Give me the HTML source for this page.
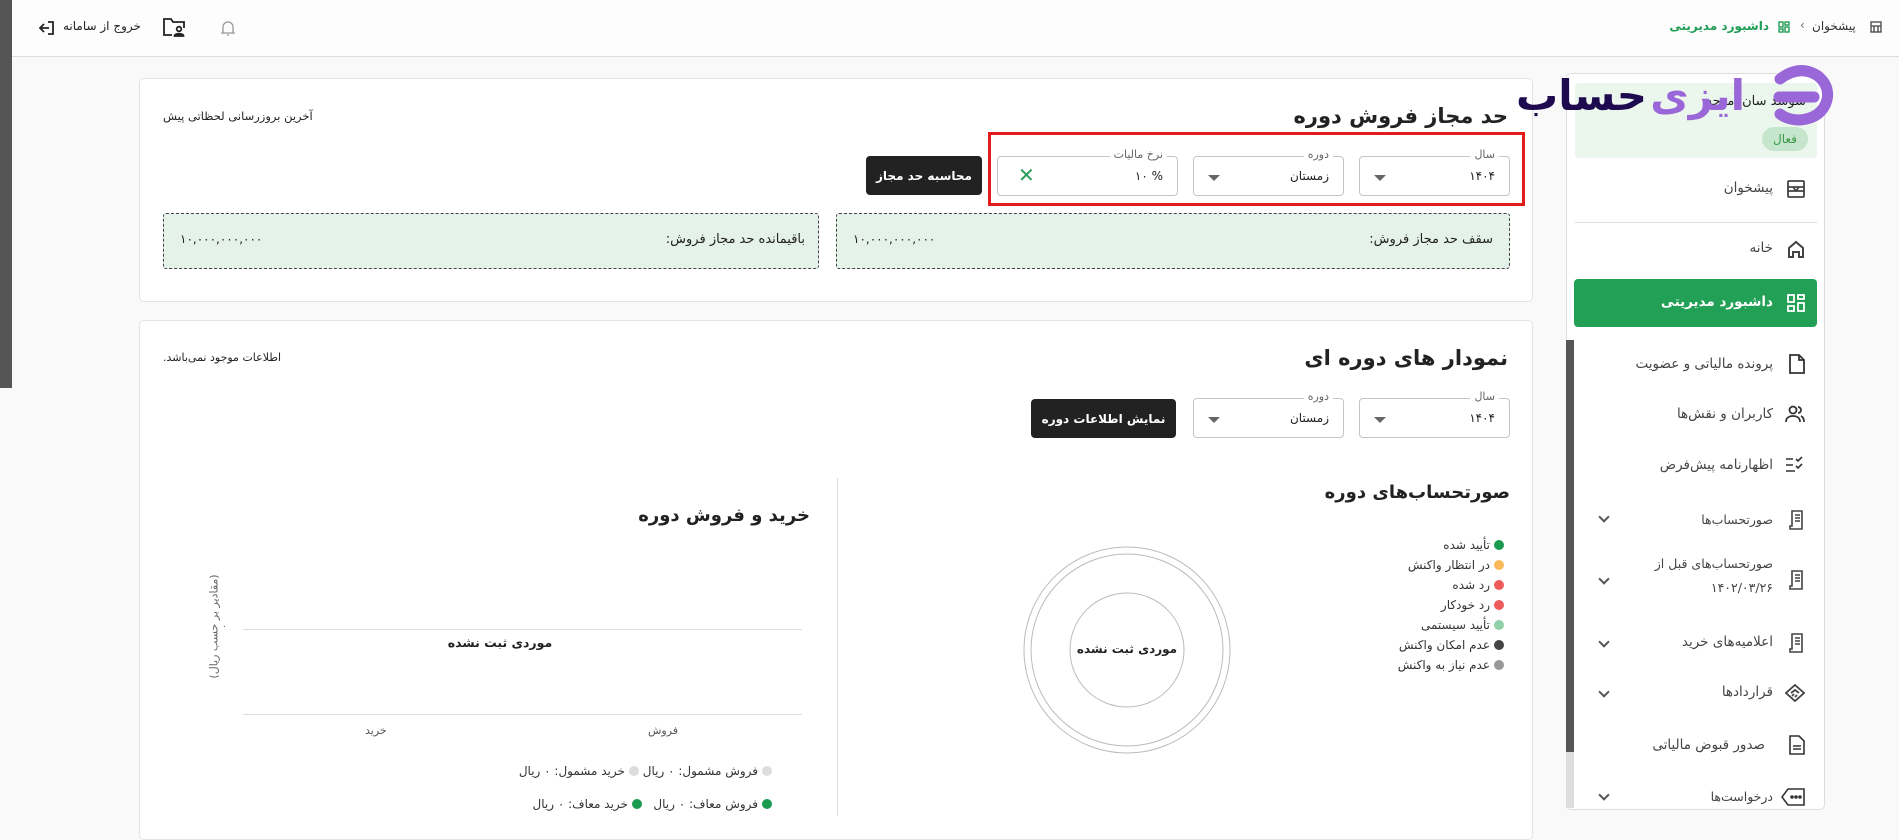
<!DOCTYPE html>
<html><head><meta charset="utf-8"><style>
*{box-sizing:border-box;margin:0;padding:0}
body{width:1899px;height:816px;overflow:hidden;background:#f8f9f8;font-family:"DejaVu Sans","Liberation Sans",sans-serif;color:#222;position:relative;direction:rtl}
.a{position:absolute}
.top{left:0;top:0;width:1899px;height:57px;background:#fdfdfd;border-bottom:1px solid #ddd}
.card{background:#fff;border:1px solid #e3e3e3;border-radius:5px}
.fld{border:1px solid #c4c4c4;border-radius:4px;background:#fff}
.lbl{position:absolute;top:-9px;right:10px;background:#fff;padding:0 4px;font-size:11px;color:#666}
.val{position:absolute;right:14px;top:12px;font-size:12px}
.tri{position:absolute;left:14px;top:18px;border-left:6px solid transparent;border-right:6px solid transparent;border-top:6px solid #666}
.btn{background:#222;color:#fff;border-radius:4px;font-size:12px;font-weight:bold;display:flex;align-items:center;justify-content:center}
.gbox{background:#e4f2e9;border:1px dashed #444;border-radius:3px}
.leg{font-size:12px;color:#333;white-space:nowrap}
.dot{display:inline-block;width:10px;height:10px;border-radius:50%;margin-left:4px;vertical-align:-1px}
.si{position:absolute;right:0;width:259px;font-size:13.5px;color:#444}
.si .t{position:absolute;right:52px;white-space:nowrap}
.si svg{position:absolute;right:20px}
.chev{position:absolute;left:26px;width:8px;height:8px;border-right:2px solid #555;border-bottom:2px solid #555;transform:rotate(45deg)}
</style></head><body>
<div class="a" style="left:0;top:0;width:1899px;height:3px;background:#eef2e8"></div>
<div class="a top"></div>
<div class="a" style="left:0;top:0;width:12px;height:388px;background:#555"></div>
<!-- top left -->
<svg class="a" style="left:39px;top:20px" width="16" height="16" viewBox="0 0 16 16" fill="none" stroke="#222" stroke-width="1.8"><path d="M9 2h5v12H9M1 8h9M5 4L1 8l4 4"/></svg>
<div class="a" style="left:63px;top:19px;font-size:12px;white-space:nowrap">خروج از سامانه</div>
<svg class="a" style="left:163px;top:18px" width="22" height="19" viewBox="0 0 22 19" fill="none" stroke="#222" stroke-width="1.8"><path d="M9 17H1V1h7l2 3h11v6"/><circle cx="16" cy="11" r="2.3"/><path d="M11.5 18c0-3 9-3 9 0z" fill="#222"/></svg>
<svg class="a" style="left:221px;top:20px" width="14" height="16" viewBox="0 0 14 16" fill="none" stroke="#999" stroke-width="1.3"><path d="M2 12V7a5 5 0 0110 0v5l1 1H1zM6 15h2"/></svg>
<!-- breadcrumb -->
<svg class="a" style="left:1870px;top:21px" width="12" height="12" viewBox="0 0 12 12" fill="none" stroke="#444" stroke-width="1.3"><rect x="1" y="1" width="10" height="10"/><path d="M1 5h10M4 5v6M8 5v6"/></svg>
<div class="a" style="left:1812px;top:19px;font-size:12px;color:#333">پیشخوان</div>
<div class="a" style="left:1800px;top:18px;font-size:12px;color:#666">›</div>
<svg class="a" style="left:1778px;top:21px" width="12" height="12" viewBox="0 0 12 12" fill="none" stroke="#1f9d55" stroke-width="1.4"><rect x="1" y="1" width="4" height="5"/><rect x="7" y="1" width="4" height="3"/><rect x="1" y="8" width="4" height="3"/><rect x="7" y="6" width="4" height="5"/></svg>
<div class="a" style="right:130px;top:19px;font-size:12px;color:#1f9d55;font-weight:bold;white-space:nowrap">داشبورد مدیریتی</div>

<!-- card 1 -->
<div class="a card" style="left:139px;top:78px;width:1394px;height:224px"></div>
<div class="a" style="right:391px;top:104px;font-size:21px;font-weight:bold;white-space:nowrap">حد مجاز فروش دوره</div>
<div class="a" style="left:163px;top:109px;font-size:11.5px;white-space:nowrap">آخرین بروزرسانی لحظاتی پیش</div>
<div class="a" style="left:988px;top:132px;width:537px;height:74px;border:3px solid #e21b1b"></div>
<div class="a fld" style="left:1359px;top:156px;width:151px;height:40px"><span class="lbl">سال</span><span class="val">۱۴۰۴</span><span class="tri"></span></div>
<div class="a fld" style="left:1193px;top:156px;width:151px;height:40px"><span class="lbl">دوره</span><span class="val">زمستان</span><span class="tri"></span></div>
<div class="a fld" style="left:997px;top:156px;width:181px;height:40px"><span class="lbl">نرخ مالیات</span><span class="val">% ۱۰</span><span style="position:absolute;left:20px;top:6px;color:#2a9d5c;font-size:20px">✕</span></div>
<div class="a btn" style="left:866px;top:156px;width:116px;height:39px">محاسبه حد مجاز</div>
<div class="a gbox" style="left:836px;top:213px;width:674px;height:56px"></div>
<div class="a" style="right:406px;top:232px;font-size:13px;white-space:nowrap">سقف حد مجاز فروش:</div>
<div class="a" style="left:853px;top:232px;font-size:12px;direction:ltr">۱۰,۰۰۰,۰۰۰,۰۰۰</div>
<div class="a gbox" style="left:163px;top:213px;width:656px;height:56px"></div>
<div class="a" style="right:1094px;top:232px;font-size:13px;white-space:nowrap">باقیمانده حد مجاز فروش:</div>
<div class="a" style="left:180px;top:232px;font-size:12px;direction:ltr">۱۰,۰۰۰,۰۰۰,۰۰۰</div>

<!-- card 2 -->
<div class="a card" style="left:139px;top:320px;width:1394px;height:520px"></div>
<div class="a" style="right:391px;top:346px;font-size:21px;font-weight:bold;white-space:nowrap">نمودار های دوره ای</div>
<div class="a" style="left:163px;top:351px;font-size:11px;white-space:nowrap">اطلاعات موجود نمی‌باشد.</div>
<div class="a fld" style="left:1359px;top:398px;width:151px;height:40px"><span class="lbl">سال</span><span class="val">۱۴۰۴</span><span class="tri"></span></div>
<div class="a fld" style="left:1193px;top:398px;width:151px;height:40px"><span class="lbl">دوره</span><span class="val">زمستان</span><span class="tri"></span></div>
<div class="a btn" style="left:1031px;top:399px;width:145px;height:39px">نمایش اطلاعات دوره</div>
<div class="a" style="left:837px;top:478px;width:1px;height:338px;background:#ddd"></div>
<div class="a" style="right:389px;top:482px;font-size:18px;font-weight:bold;white-space:nowrap">صورتحساب‌های دوره</div>
<div class="a" style="right:395px;top:535px;line-height:20px;text-align:right">
<div class="leg"><span class="dot" style="background:#1a9b50"></span>تأیید شده</div>
<div class="leg"><span class="dot" style="background:#f9b95a"></span>در انتظار واکنش</div>
<div class="leg"><span class="dot" style="background:#ee5b5b"></span>رد شده</div>
<div class="leg"><span class="dot" style="background:#ee5b5b"></span>رد خودکار</div>
<div class="leg"><span class="dot" style="background:#8fd0a6"></span>تأیید سیستمی</div>
<div class="leg"><span class="dot" style="background:#444"></span>عدم امکان واکنش</div>
<div class="leg"><span class="dot" style="background:#999"></span>عدم نیاز به واکنش</div>
</div>
<svg class="a" style="left:1022px;top:545px" width="210" height="210"><g fill="none" stroke="#bbb" stroke-width="1"><circle cx="105" cy="105" r="103"/><circle cx="105" cy="105" r="96"/><circle cx="105" cy="105" r="57"/></g></svg>
<div class="a" style="left:1067px;top:642px;width:120px;text-align:center;font-size:12px;font-weight:bold;white-space:nowrap">موردی ثبت نشده</div>
<!-- left chart -->
<div class="a" style="right:1089px;top:505px;font-size:18px;font-weight:bold;white-space:nowrap">خرید و فروش دوره</div>
<div class="a" style="left:154px;top:620px;width:120px;font-size:11px;color:#666;transform:rotate(-90deg);text-align:center;white-space:nowrap">(مقادیر بر حسب ریال)</div>
<div class="a" style="left:222px;top:622px;font-size:9px;color:#555">۰</div>
<div class="a" style="left:243px;top:629px;width:559px;height:1px;background:#ddd"></div>
<div class="a" style="left:243px;top:714px;width:559px;height:1px;background:#ddd"></div>
<div class="a" style="left:430px;top:635px;width:140px;text-align:center;font-size:12.5px;font-weight:bold;white-space:nowrap">موردی ثبت نشده</div>
<div class="a" style="left:365px;top:724px;font-size:11px;color:#555">خرید</div>
<div class="a" style="left:648px;top:724px;font-size:11px;color:#555">فروش</div>
<div class="a leg" style="right:1127px;top:764px"><span class="dot" style="background:#ddd"></span>فروش مشمول: ۰ ریال <span class="dot" style="background:#ddd"></span>خرید مشمول: ۰ ریال</div>
<div class="a leg" style="right:1127px;top:797px"><span class="dot" style="background:#1a9b50"></span>فروش معاف: ۰ ریال &nbsp; <span class="dot" style="background:#1a9b50"></span>خرید معاف: ۰ ریال</div>

<!-- sidebar -->
<div class="a card" style="left:1566px;top:73px;width:259px;height:737px;border-color:#ddd"></div>
<div class="a" style="left:1566px;top:340px;width:8px;height:412px;background:#555"></div>
<div class="a" style="left:1566px;top:752px;width:8px;height:56px;background:#ddd"></div>
<div class="a" style="left:1575px;top:83px;width:242px;height:75px;background:#ebf6ed;border-radius:4px"></div>
<div class="a" style="right:93px;top:94px;font-size:13px;white-space:nowrap">سوشد سان آموجه</div>
<div class="a" style="left:1762px;top:127px;width:46px;height:24px;border-radius:12px;background:#c5e6cc;color:#3a9a4a;font-size:12px;text-align:center;line-height:24px">فعال</div>
<!-- logo -->
<div class="a" style="right:252px;top:68px;font-size:42px;font-weight:bold;color:#1e0b4f;white-space:nowrap;line-height:56px">حساب</div>
<div class="a" style="right:154px;top:68px;font-size:42px;font-weight:bold;color:#9a67d8;white-space:nowrap;line-height:56px">ایزی</div>
<svg class="a" style="left:1772px;top:64px" width="62" height="66" viewBox="0 0 62 66" fill="none" stroke="#9a67d8" stroke-width="11" stroke-linecap="round"><path d="M8 15Q28 0 46 12Q58 22 55 36Q50 54 28 56Q16 56 8 50"/><path d="M7 33H42"/></svg>
<!-- items -->
<div class="si" style="top:180px;right:74px;height:26px"><svg width="18" height="18" viewBox="0 0 18 18" fill="none" stroke="#444" stroke-width="1.8"><rect x="1" y="1" width="16" height="16" rx="1"/><path d="M1 7h16M1 11h16M6 7l3 4M12 7l-3 4"/></svg><span class="t" style="top:0">پیشخوان</span></div>
<div class="a" style="left:1575px;top:222px;width:242px;height:1px;background:#ddd"></div>
<div class="si" style="top:240px;right:74px;height:26px"><svg width="18" height="18" viewBox="0 0 18 18" fill="none" stroke="#444" stroke-width="2"><path d="M2 8l7-6 7 6v9h-4v-5H6v5H2z"/></svg><span class="t" style="top:0">خانه</span></div>
<div class="a" style="left:1574px;top:279px;width:243px;height:48px;background:#22a055;border-radius:4px"></div>
<div class="si" style="top:294px;right:74px;color:#fff;font-weight:bold"><svg width="18" height="18" viewBox="0 0 18 18" fill="none" stroke="#fff" stroke-width="1.8"><rect x="1" y="1" width="6" height="7"/><rect x="11" y="1" width="6" height="4"/><rect x="1" y="12" width="6" height="5"/><rect x="11" y="9" width="6" height="8"/></svg><span class="t" style="top:0">داشبورد مدیریتی</span></div>
<div class="si" style="top:354px;right:74px"><svg width="16" height="20" viewBox="0 0 16 20" fill="none" stroke="#333" stroke-width="1.8"><path d="M1 1h9l5 5v13H1zM10 1v5h5"/></svg><span class="t" style="top:2px">پرونده مالیاتی و عضویت</span></div>
<div class="si" style="top:405px;right:74px"><svg width="20" height="18" viewBox="0 0 20 18" fill="none" stroke="#333" stroke-width="1.8"><circle cx="8" cy="5" r="3.5"/><path d="M1 17c0-4 3-6 7-6s7 2 7 6M13 2a3 3 0 010 6M16 11c2 1 3 3 3 6"/></svg><span class="t" style="top:1px">کاربران و نقش‌ها</span></div>
<div class="si" style="top:456px;right:74px"><svg width="20" height="18" viewBox="0 0 20 18" fill="none" stroke="#333" stroke-width="1.6"><path d="M1 3h7M1 9h7M1 15h9M11 3l2 2 4-4M11 10l2 2 4-4"/></svg><span class="t" style="top:1px">اظهارنامه پیش‌فرض</span></div>
<div class="si" style="top:510px;right:74px"><svg width="16" height="20" viewBox="0 0 16 20" fill="none" stroke="#444" stroke-width="1.6"><path d="M3 1h10v18H1v-3h2zM6 5h5M6 8h5M6 11h5"/></svg><span class="t" style="top:2px;font-size:12.5px">صورتحساب‌ها</span></div>
<div class="chev a" style="left:1600px;top:513px"></div>
<div class="si" style="top:570px;right:74px"><svg width="16" height="20" viewBox="0 0 16 20" fill="none" stroke="#444" stroke-width="1.6"><path d="M3 1h10v18H1v-3h2zM6 5h5M6 8h5M6 11h5"/></svg><span class="t" style="top:-14px;font-size:12.5px">صورتحساب‌های قبل از</span><span class="t" style="top:10px;font-size:12.5px">۱۴۰۲/۰۳/۲۶</span></div>
<div class="chev a" style="left:1600px;top:575px"></div>
<div class="si" style="top:633px;right:74px"><svg width="16" height="20" viewBox="0 0 16 20" fill="none" stroke="#444" stroke-width="1.6"><path d="M3 1h10v18H1v-3h2zM6 5h5M6 8h5M6 11h5"/></svg><span class="t" style="top:1px">اعلامیه‌های خرید</span></div>
<div class="chev a" style="left:1600px;top:638px"></div>
<div class="si" style="top:684px;right:74px"><svg width="20" height="18" viewBox="0 0 20 18" fill="none" stroke="#444" stroke-width="1.8"><path d="M10 1l9 8-9 8-9-8zM6 9l4-3 4 3M7 12l2-2M10 13l2-2"/></svg><span class="t" style="top:0">قراردادها</span></div>
<div class="chev a" style="left:1600px;top:688px"></div>
<div class="si" style="top:735px;right:74px"><svg width="16" height="20" viewBox="0 0 16 20" fill="none" stroke="#333" stroke-width="1.6"><path d="M1 1h9l5 5v13H1zM4 11h8M4 14h8"/></svg><span class="t" style="top:2px;right:60px">صدور قبوض مالیاتی</span></div>
<div class="si" style="top:788px;right:74px"><svg width="24" height="18" viewBox="0 0 24 18" fill="none" stroke="#333" stroke-width="1.6"><path d="M7 1h16v16H7L1 9z"/><circle cx="11" cy="9" r="1" fill="#333"/><circle cx="15" cy="9" r="1" fill="#333"/><circle cx="19" cy="9" r="1" fill="#333"/></svg><span class="t" style="top:1px;font-size:12.5px">درخواست‌ها</span></div>
<div class="chev a" style="left:1600px;top:791px"></div>
</body></html>
